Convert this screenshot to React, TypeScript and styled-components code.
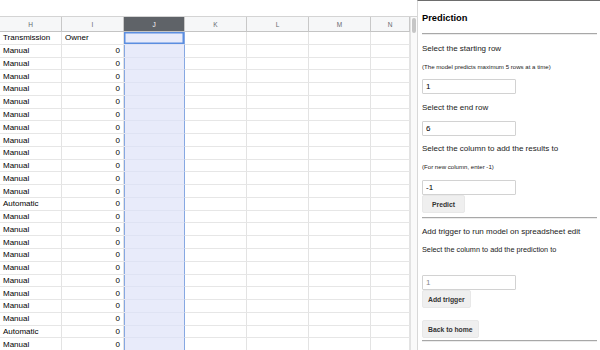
import styled, { createGlobalStyle } from 'styled-components'

const GlobalStyle = createGlobalStyle`
  html, body {
    margin: 0;
    padding: 0;
    background: #ffffff;
    font-family: 'Liberation Sans', Arial, sans-serif;
  }
  * {
    box-sizing: border-box;
  }
`

const COLUMNS = [
  { key: 'H', width: 62 },
  { key: 'I', width: 62 },
  { key: 'J', width: 61 },
  { key: 'K', width: 62 },
  { key: 'L', width: 62 },
  { key: 'M', width: 62 },
  { key: 'N', width: 39 }
]

const SELECTED = 'J'

// column H values, column I owner count
const ROWS: [string, string][] = [
  ['Transmission', 'Owner'],
  ...Array.from({ length: 12 }, () => ['Manual', '0'] as [string, string]),
  ['Automatic', '0'],
  ...Array.from({ length: 9 }, () => ['Manual', '0'] as [string, string]),
  ['Automatic', '0'],
  ['Manual', '0']
]

const App = () => {
  return (
    <>
      <GlobalStyle />
      <Frame>
        <Sheet>
          <TopStrip />
          <SheetBody>
            <Grid $columns={COLUMNS.map((c) => `${c.width}px`).join(' ')}>
              {COLUMNS.map((c) => (
                <HeaderCell key={c.key} $active={c.key === SELECTED}>
                  {c.key}
                </HeaderCell>
              ))}
              {ROWS.map(([trans, owner], r) =>
                COLUMNS.map((c) => {
                  let text = ''
                  let right = false
                  if (c.key === 'H') text = trans
                  if (c.key === 'I') {
                    text = owner
                    right = r > 0
                  }
                  return (
                    <Cell
                      key={`${c.key}${r}`}
                      $right={right}
                      $selected={c.key === SELECTED}
                      $active={c.key === SELECTED && r === 0}>
                      {text}
                    </Cell>
                  )
                })
              )}
            </Grid>
            <ScrollTrack>
              <ScrollThumb />
            </ScrollTrack>
          </SheetBody>
        </Sheet>

        <Panel>
          <Title>Prediction</Title>
          <Rule $top={9} />
          <Label $top={9}>Select the starting row</Label>
          <Hint $top={9}>(The model predicts maximum 5 rows at a time)</Hint>
          <Field $top={8} defaultValue="1" />
          <Label $top={9}>Select the end row</Label>
          <Field $top={8} defaultValue="6" />
          <Label $top={8}>Select the column to add the results to</Label>
          <Hint $top={9}>(For new column, enter -1)</Hint>
          <Field $top={9} defaultValue="-1" />
          <Button>Predict</Button>
          <Rule $top={4} />
          <Label $top={8}>Add trigger to run model on spreadsheet edit</Label>
          <SubLabel $top={9}>Select the column to add the prediction to</SubLabel>
          <Field $top={21} $muted defaultValue="1" />
          <Button>Add trigger</Button>
          <Button $top={12}>Back to home</Button>
          <Rule $top={2} />
        </Panel>
      </Frame>
    </>
  )
}

const Frame = styled.div`
  display: flex;
  width: 600px;
  height: 350px;
  overflow: hidden;
  background: #fff;
`

const Sheet = styled.div`
  width: 417px;
  flex: none;
  display: flex;
  flex-direction: column;
`

const TopStrip = styled.div`
  height: 17px;
  flex: none;
  background: #fff;
  border-bottom: 1px solid #d4d4d4;
`

const SheetBody = styled.div`
  flex: 1;
  display: flex;
  min-height: 0;
`

const Grid = styled.div<{ $columns: string }>`
  width: 410px;
  display: grid;
  grid-template-columns: ${(p) => p.$columns};
  grid-template-rows: 15px;
  grid-auto-rows: 12.78px;
  overflow: hidden;
  align-content: start;
`

const HeaderCell = styled.div<{ $active?: boolean }>`
  display: flex;
  align-items: center;
  justify-content: center;
  font-size: 6.5px;
  color: ${(p) => (p.$active ? '#ffffff' : '#666a6e')};
  background: ${(p) => (p.$active ? '#5f6368' : '#f6f7f8')};
  border-right: 1px solid #c8c8c8;
  border-bottom: 1px solid #c4c4c4;
`

const Cell = styled.div<{ $right?: boolean; $selected?: boolean; $active?: boolean }>`
  display: flex;
  align-items: center;
  justify-content: ${(p) => (p.$right ? 'flex-end' : 'flex-start')};
  padding: 0 3px;
  font-size: 8px;
  color: #000;
  white-space: nowrap;
  overflow: hidden;
  border-right: 1px solid #e3e3e3;
  border-bottom: 1px solid ${(p) => (p.$selected ? '#dfe3f3' : '#e6e6e6')};
  background: ${(p) => (p.$selected ? '#e8ebfa' : '#fff')};
  ${(p) => p.$selected && 'border-right-color: #86a8e2; box-shadow: inset 1px 0 0 #86a8e2;'}
  ${(p) => p.$active && 'box-shadow: inset 0 0 0 1.5px #5b8ee0;'}
`

const ScrollTrack = styled.div`
  width: 7px;
  flex: none;
  background: #fafafa;
  border-left: 1px solid #e2e2e2;
  padding: 1px 1px 0 1px;
`

const ScrollThumb = styled.div`
  height: 15px;
  border-radius: 3px;
  background: #c6c6c6;
`

const Panel = styled.div`
  flex: 1;
  display: flex;
  flex-direction: column;
  align-items: flex-start;
  padding: 0 3px 0 4px;
  border-left: 1px solid #d8d8d8;
  border-top: 1px solid #6d6d6d;
  color: #1a1a1a;
`

const Title = styled.div`
  margin-top: 11px;
  line-height: 12px;
  font-size: 9.3px;
  font-weight: 700;
  color: #000;
`

const Rule = styled.div<{ $top: number }>`
  align-self: stretch;
  margin-top: ${(p) => p.$top}px;
  height: 2px;
  flex: none;
  border-top: 1px solid #a8a8a8;
  border-bottom: 1px solid #ececec;
`

const Label = styled.div<{ $top: number }>`
  margin-top: ${(p) => p.$top}px;
  line-height: 10px;
  font-size: 8px;
  white-space: nowrap;
`

const SubLabel = styled(Label)`
  line-height: 8px;
  font-size: 7.3px;
`

const Hint = styled(Label)`
  line-height: 8px;
  font-size: 6.1px;
`

const Field = styled.input<{ $top: number; $muted?: boolean }>`
  margin: ${(p) => p.$top}px 0 0 0;
  width: 94px;
  height: 15px;
  flex: none;
  padding: 0 3px;
  border: 1px solid #d2d2d2;
  border-radius: 1px;
  outline: none;
  background: #fff;
  font-family: 'Liberation Sans', Arial, sans-serif;
  font-size: 8px;
  color: ${(p) => (p.$muted ? '#8a8a8a' : '#000')};
`

const Button = styled.button<{ $top?: number }>`
  margin: ${(p) => p.$top ?? 0}px 0 0 0;
  height: 18px;
  min-width: 43px;
  flex: none;
  padding: 0 5px;
  border: 1px solid #e8e8e8;
  border-radius: 2px;
  background: #efefef;
  font-family: 'Liberation Sans', Arial, sans-serif;
  font-size: 6.8px;
  font-weight: 700;
  color: #333;
  text-align: center;
`

export default App
